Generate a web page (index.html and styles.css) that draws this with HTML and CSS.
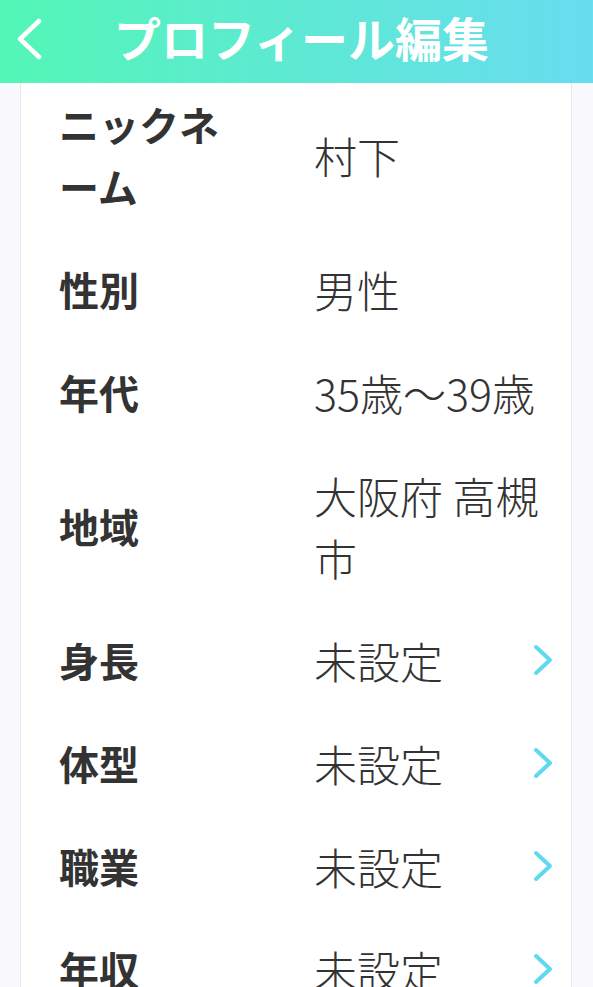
FILE: index.html
```html
<!DOCTYPE html>
<html lang="ja">
<head>
<meta charset="utf-8">
<title>プロフィール編集</title>
<link rel="stylesheet" href="styles.css">
</head>
<body>
<header class="app-header">
  <button class="back-btn" aria-label="戻る">
    <svg width="30" height="42" viewBox="0 0 30 42"><polyline points="24,3 5,21 24,39" fill="none" stroke="#fff" stroke-width="4.5" stroke-linecap="round" stroke-linejoin="round"/></svg>
  </button>
  <h1 class="app-title">プロフィール編集</h1>
</header>
<main class="page">
  <section class="card">
    <div class="row"><div class="label"><span class="label-text">ニックネーム</span></div><div class="value">村下</div></div>
    <div class="row"><div class="label"><span class="label-text">性別</span></div><div class="value">男性</div></div>
    <div class="row"><div class="label"><span class="label-text">年代</span></div><div class="value">35歳〜39歳</div></div>
    <div class="row"><div class="label"><span class="label-text">地域</span></div><div class="value">大阪府 高槻市</div></div>
    <div class="row"><div class="label"><span class="label-text">身長</span></div><div class="value">未設定</div><span class="chev"><svg width="22" height="34" viewBox="0 0 22 34"><polyline points="4,4 18,17 4,30" fill="none" stroke="#5ed9f1" stroke-width="4" stroke-linecap="round" stroke-linejoin="round"/></svg></span></div>
    <div class="row"><div class="label"><span class="label-text">体型</span></div><div class="value">未設定</div><span class="chev"><svg width="22" height="34" viewBox="0 0 22 34"><polyline points="4,4 18,17 4,30" fill="none" stroke="#5ed9f1" stroke-width="4" stroke-linecap="round" stroke-linejoin="round"/></svg></span></div>
    <div class="row"><div class="label"><span class="label-text">職業</span></div><div class="value">未設定</div><span class="chev"><svg width="22" height="34" viewBox="0 0 22 34"><polyline points="4,4 18,17 4,30" fill="none" stroke="#5ed9f1" stroke-width="4" stroke-linecap="round" stroke-linejoin="round"/></svg></span></div>
    <div class="row"><div class="label"><span class="label-text">年収</span></div><div class="value">未設定</div><span class="chev"><svg width="22" height="34" viewBox="0 0 22 34"><polyline points="4,4 18,17 4,30" fill="none" stroke="#5ed9f1" stroke-width="4" stroke-linecap="round" stroke-linejoin="round"/></svg></span></div>
  </section>
</main>
</body>
</html>
```

FILE: styles.css
```css
* { box-sizing: border-box; }
html, body { margin: 0; padding: 0; }
body {
  background: #f8f8fd;
  font-family: "Noto Sans CJK JP", "Noto Sans", sans-serif;
  color: #333;
  overflow: hidden;
  height: 987px;
}
.app-header {
  position: fixed;
  top: 0;
  left: 0;
  right: 0;
  z-index: 10;
  height: 83px;
  display: flex;
  align-items: center;
  padding-left: 15px;
  background: linear-gradient(90deg, #53f6b6 0%, #68dcf0 100%);
}
.back-btn {
  border: 0;
  background: transparent;
  padding: 0;
  width: 30px;
  height: 42px;
  display: flex;
  margin-top: -6px;
}
.app-title {
  margin: -10px 0 0 69px;
  font-size: 47px;
  font-weight: 700;
  color: #fff;
  line-height: 1;
}
.page {
  padding-top: 72px;
}
.card {
  margin: 0 21px 0 20px;
  background: #fff;
  border-left: 1px solid #e7e7ec;
  border-right: 1px solid #e7e7ec;
  padding: 0 18px 0 38px;
}
.row {
  display: grid;
  grid-template-columns: 255px 1fr auto;
  align-items: center;
  padding: 20.5px 0;
}
.label {
  font-size: 40px;
  font-weight: 700;
  line-height: 62px;
  color: #333;
}
.label-text {
  display: block;
  max-width: 180px;
}
.value {
  font-size: 43px;
  font-weight: 300;
  line-height: 62px;
  color: #333;
}
.chev {
  display: flex;
  width: 22px;
  margin-right: -1px;
}
```
